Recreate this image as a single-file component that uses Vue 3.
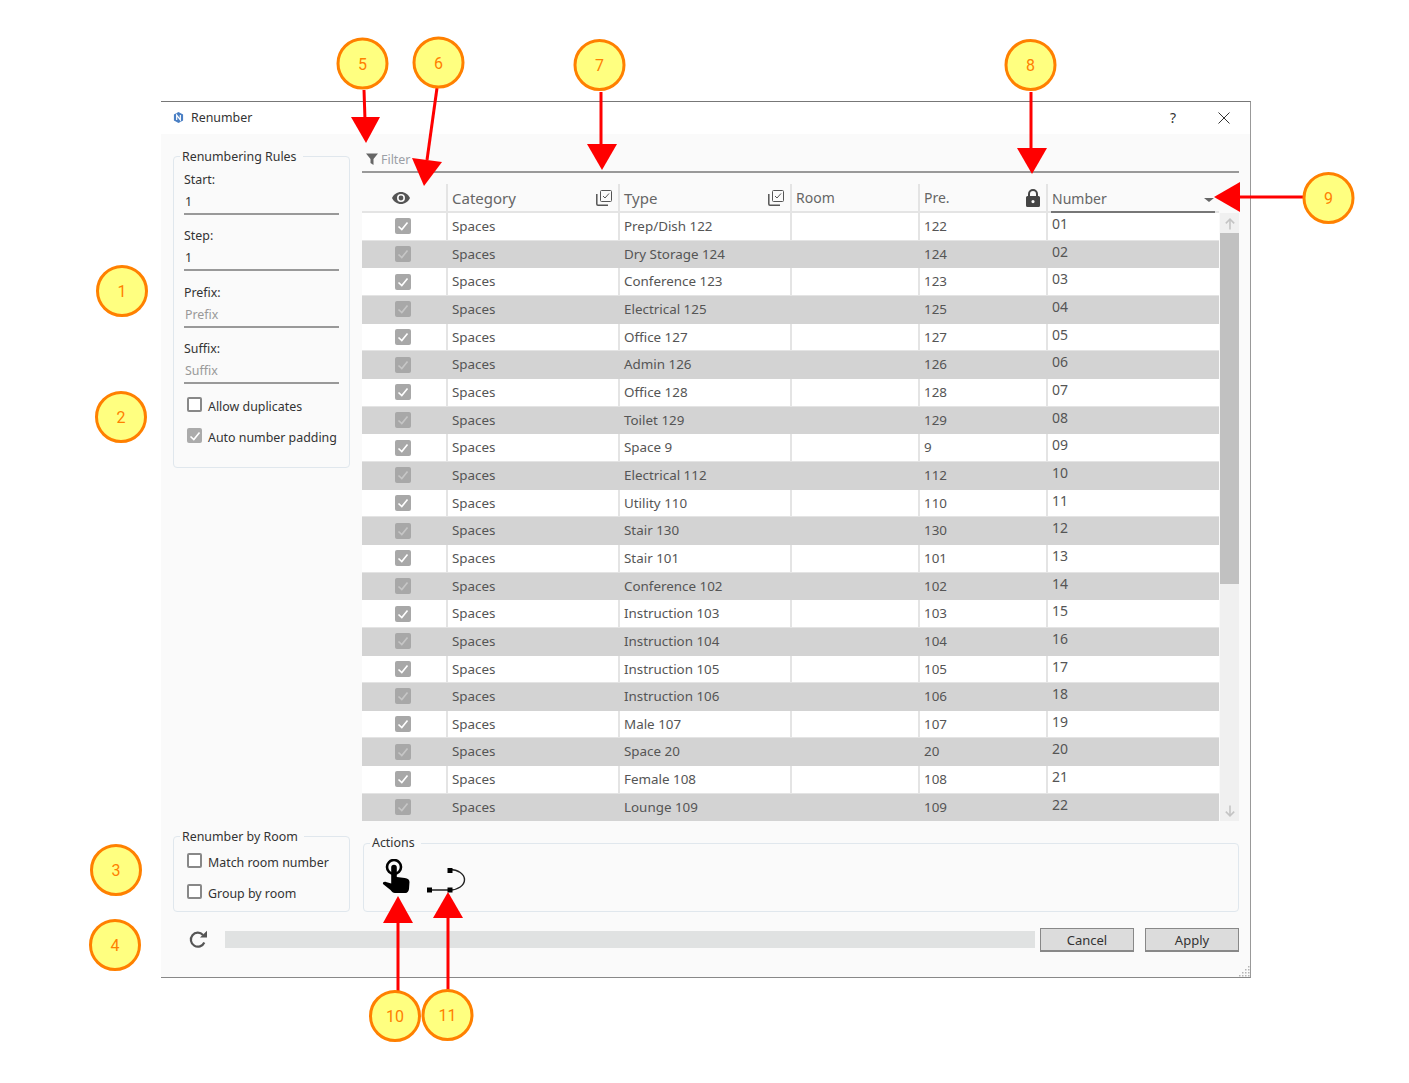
<template>
  <div class="page">
    <div class="window">
      <div class="titlebar">
        <svg class="app-icon" viewBox="0 0 12 12" width="11" height="11">
          <path d="M6 0 11 2.800V9.200L6 12 1 9.200V2.800Z" fill="#4a7fc4" />
          <path d="M4 8.600V3.400L8 8.600V3.400" fill="none" stroke="#fff" stroke-width="1.300" />
        </svg>
        <span class="title">Renumber</span>
        <span class="help">?</span>
        <svg class="close" viewBox="0 0 12 12" width="12" height="12">
          <path d="M.5.5 11.500 11.500M11.500.5.5 11.500" stroke="#333" stroke-width="1" fill="none" />
        </svg>
      </div>

      <div class="content">
        <!-- 左侧规则 -->
        <div class="left-col">
          <fieldset class="group rules">
            <legend>Renumbering Rules</legend>
            <div v-for="f in fields" :key="f.label" class="field">
              <label>{{ f.label }}:</label>
              <div class="value" :class="{ placeholder: f.placeholder }">{{ f.value }}</div>
            </div>
            <div class="check-line first">
              <span class="box"></span>
              <span>Allow duplicates</span>
            </div>
            <div class="check-line">
              <span class="box checked">
                <svg viewBox="0 0 16 16" width="16" height="16">
                  <path d="M3.500 8.500 6.800 11.500 12.500 4.500" fill="none" stroke="#fff" stroke-width="1.600" />
                </svg>
              </span>
              <span>Auto number padding</span>
            </div>
          </fieldset>
        </div>

        <!-- 表格 -->
        <div class="right-col">
          <div class="filter-bar">
            <svg viewBox="0 0 12 12" width="12" height="12">
              <path d="M0 .5H12L7.500 6V12L4.500 10V6Z" fill="#666" />
            </svg>
            <span>Filter</span>
          </div>

          <div class="table-head row-grid">
            <div class="th eye-cell">
              <svg viewBox="0 0 18 12" width="18" height="12">
                <path d="M9 0C5 0 1.700 2.500 0 6c1.700 3.500 5 6 9 6s7.300-2.500 9-6c-1.700-3.500-5-6-9-6Zm0 10a4 4 0 1 1 0-8 4 4 0 0 1 0 8Zm0-6.400a2.400 2.400 0 1 0 0 4.800 2.400 2.400 0 0 0 0-4.800Z" fill="#555" />
              </svg>
            </div>
            <div class="th">
              <span class="strong">Category</span>
              <svg class="stack" viewBox="0 0 16 16" width="16" height="16">
                <rect x="4.500" y=".5" width="11" height="11" rx="1" fill="none" stroke="#555" />
                <path d="M.8 4v10a1.200 1.200 0 0 0 1.200 1.200h10" fill="none" stroke="#555" stroke-width="1.500" />
                <path d="M7 6l2 2 4-4.500" fill="none" stroke="#555" />
              </svg>
            </div>
            <div class="th">
              <span class="strong">Type</span>
              <svg class="stack" viewBox="0 0 16 16" width="16" height="16">
                <rect x="4.500" y=".5" width="11" height="11" rx="1" fill="none" stroke="#555" />
                <path d="M.8 4v10a1.200 1.200 0 0 0 1.200 1.200h10" fill="none" stroke="#555" stroke-width="1.500" />
                <path d="M7 6l2 2 4-4.500" fill="none" stroke="#555" />
              </svg>
            </div>
            <div class="th"><span>Room</span></div>
            <div class="th">
              <span>Pre.</span>
              <svg class="lock" viewBox="0 0 14 18" width="14" height="18">
                <path d="M2 7V5a5 5 0 0 1 10 0v2h-2V5a3 3 0 0 0-6 0v2Z" fill="#444" />
                <path d="M1.500 7h11A1.500 1.500 0 0 1 14 8.500v8a1.500 1.500 0 0 1-1.500 1.500h-11A1.500 1.500 0 0 1 0 16.500v-8A1.500 1.500 0 0 1 1.500 7Zm5.500 4a1.600 1.600 0 1 0 0 3.200A1.600 1.600 0 0 0 7 11Z" fill="#444" fill-rule="evenodd" />
              </svg>
            </div>
            <div class="th number-head">
              <span>Number</span>
              <span class="sort"></span>
            </div>
          </div>

          <div class="table-body">
            <div class="rows">
              <div v-for="(r, i) in rows" :key="i" class="row row-grid" :class="{ alt: i % 2 === 1 }">
                <div class="td check-cell">
                  <span class="row-check">
                    <svg viewBox="0 0 16 16" width="16" height="16">
                      <path d="M3.500 8.500 6.800 11.500 12.500 4.500" fill="none" stroke-width="1.600" />
                    </svg>
                  </span>
                </div>
                <div class="td">Spaces</div>
                <div class="td">{{ r.type }}</div>
                <div class="td"></div>
                <div class="td">{{ r.pre }}</div>
                <div class="td num">{{ String(i + 1).padStart(2, '0') }}</div>
              </div>
            </div>
            <div class="scrollbar">
              <svg viewBox="0 0 10 10" width="12" height="12">
                <path d="M5 9.500V1M1.500 4.500 5 1l3.500 3.500" fill="none" stroke="#c4c4c4" stroke-width="1.300" />
              </svg>
              <div class="thumb"></div>
              <svg class="arrow-down" viewBox="0 0 10 10" width="12" height="12">
                <path d="M5 .5V9M1.500 5.500 5 9l3.500-3.500" fill="none" stroke="#c4c4c4" stroke-width="1.300" />
              </svg>
            </div>
          </div>
        </div>

        <fieldset class="group by-room">
          <legend>Renumber by Room</legend>
          <div class="check-line room-first">
            <span class="box"></span>
            <span>Match room number</span>
          </div>
          <div class="check-line">
            <span class="box"></span>
            <span>Group by room</span>
          </div>
        </fieldset>

        <fieldset class="group actions">
          <legend>Actions</legend>
          <div class="action-icons">
            <svg viewBox="0 0 30 38" width="30" height="38">
              <circle cx="12" cy="8" r="7" fill="none" stroke="#000" stroke-width="2.600" />
              <path d="M9.200 8.500a2.800 2.800 0 0 1 5.600 0v9.500l8 1c3 .5 4.700 1.500 4.700 4l-.5 7c-.3 2-1.500 4-3.500 4H13c-2 0-3-1-4.500-3L1 25c-.5-1.500 1-2.500 3-2l5.200 1.500Z" fill="#000" />
            </svg>
            <svg class="curve" viewBox="0 0 40 26" width="40" height="26">
              <path d="M3 22H23A14.500 10.250 0 0 0 23 1.500" fill="none" stroke="#222" stroke-width="1.400" />
              <rect x="0" y="19.500" width="5" height="5" fill="#000" />
              <rect x="20.500" y="19.500" width="5" height="5" fill="#000" />
              <rect x="20.500" y="0" width="5" height="5" fill="#000" />
            </svg>
          </div>
        </fieldset>
      </div>

      <div class="footer">
        <div class="refresh">
          <svg viewBox="0 0 20 20" width="20" height="20">
            <path d="M16.300 12.500A7 7 0 1 1 15 4.900" fill="none" stroke="#555" stroke-width="2.200" />
            <path d="M12 7.500H19V.8Z" fill="#555" />
          </svg>
        </div>
        <div class="progress"></div>
        <button class="btn cancel">Cancel</button>
        <button class="btn">Apply</button>
      </div>

      <svg class="grip" viewBox="0 0 12 12" width="12" height="12">
        <g fill="#b5b5b5">
          <rect x="10" y="1" width="1.500" height="1.500" />
          <rect x="7" y="4" width="1.500" height="1.500" />
          <rect x="10" y="4" width="1.500" height="1.500" />
          <rect x="4" y="7" width="1.500" height="1.500" />
          <rect x="7" y="7" width="1.500" height="1.500" />
          <rect x="10" y="7" width="1.500" height="1.500" />
          <rect x="1" y="10" width="1.500" height="1.500" />
          <rect x="4" y="10" width="1.500" height="1.500" />
          <rect x="7" y="10" width="1.500" height="1.500" />
          <rect x="10" y="10" width="1.500" height="1.500" />
        </g>
      </svg>
    </div>

    <!-- 标注 -->
    <svg class="notes" viewBox="0 0 1409 1083" width="1409" height="1083">
      <g stroke="#ff0000" stroke-width="3" fill="none">
        <path d="M364 90 365 120" />
        <path d="M437 88 427 160" />
        <path d="M601 92V146" />
        <path d="M1031 92V150" />
        <path d="M1238 197H1304" />
        <path d="M398 920V992" />
        <path d="M448 916V990" />
      </g>
      <g fill="#ff0000">
        <path d="M351 117H380L366 143Z" />
        <path d="M412 158 442 162 424 186Z" />
        <path d="M587 144H617L602 170Z" />
        <path d="M1017 148H1047L1032 174Z" />
        <path d="M1214 197 1240 182V212Z" />
        <path d="M398 896 383 923H413Z" />
        <path d="M448 892 433 918H463Z" />
      </g>
      <g v-for="n in notes" :key="n.t">
        <circle :cx="n.x" :cy="n.y" r="24.500" fill="#ffff80" stroke="#ff8000" stroke-width="3" />
        <text :x="n.x" :y="n.y + 6" text-anchor="middle" class="note-text">{{ n.t }}</text>
      </g>
    </svg>
  </div>
</template>

<script setup>
const fields = [
  { label: 'Start', value: '1' },
  { label: 'Step', value: '1' },
  { label: 'Prefix', value: 'Prefix', placeholder: true },
  { label: 'Suffix', value: 'Suffix', placeholder: true }
]

const rows = [
  { type: 'Prep/Dish 122', pre: '122' },
  { type: 'Dry Storage 124', pre: '124' },
  { type: 'Conference 123', pre: '123' },
  { type: 'Electrical 125', pre: '125' },
  { type: 'Office 127', pre: '127' },
  { type: 'Admin 126', pre: '126' },
  { type: 'Office 128', pre: '128' },
  { type: 'Toilet 129', pre: '129' },
  { type: 'Space 9', pre: '9' },
  { type: 'Electrical 112', pre: '112' },
  { type: 'Utility 110', pre: '110' },
  { type: 'Stair 130', pre: '130' },
  { type: 'Stair 101', pre: '101' },
  { type: 'Conference 102', pre: '102' },
  { type: 'Instruction 103', pre: '103' },
  { type: 'Instruction 104', pre: '104' },
  { type: 'Instruction 105', pre: '105' },
  { type: 'Instruction 106', pre: '106' },
  { type: 'Male 107', pre: '107' },
  { type: 'Space 20', pre: '20' },
  { type: 'Female 108', pre: '108' },
  { type: 'Lounge 109', pre: '109' }
]

const notes = [
  { t: '1', x: 122, y: 291 },
  { t: '2', x: 121, y: 417 },
  { t: '3', x: 116, y: 870 },
  { t: '4', x: 115, y: 945 },
  { t: '5', x: 362.5, y: 63.5 },
  { t: '6', x: 438.5, y: 62.5 },
  { t: '7', x: 599.5, y: 65 },
  { t: '8', x: 1030.5, y: 65 },
  { t: '9', x: 1328.5, y: 198 },
  { t: '10', x: 395, y: 1016 },
  { t: '11', x: 447.5, y: 1015 }
]
</script>

<style>
body {
  background: #fff;
}
</style>

<style scoped>
.page {
  position: relative;
  width: 1409px;
  height: 1083px;
  padding: 101px 0 0 161px;
  box-sizing: border-box;
  overflow: hidden;
  background: #fff;
  font-family: "Noto Sans", "Open Sans", sans-serif;
  font-size: 12.4px;
  color: #333;
}

.window {
  position: relative;
  width: 1090px;
  height: 877px;
  box-sizing: border-box;
  background: #fafafa;
  border-top: 1px solid #777;
  border-right: 1px solid #999;
  border-bottom: 1px solid #888;
}

.titlebar {
  height: 32px;
  display: flex;
  align-items: center;
  background: #fff;
  padding-left: 12px;
  padding-bottom: 1px;
  box-sizing: border-box;
}

.title {
  margin-left: 7px;
}

.help {
  margin-left: auto;
  font-size: 14px;
}

.close {
  margin: 0 20px 0 42px;
}

.content {
  display: grid;
  grid-template-columns: 177px 877px;
  column-gap: 12px;
  padding-left: 12px;
}

.left-col {
  padding-top: 12px;
}

.group {
  margin: 0;
  border: 1px solid #e0e7ed;
  border-radius: 4px;
  box-sizing: border-box;
  min-width: 0;
}

.group legend {
  padding: 0 6px 0 2px;
  margin-left: -4px;
  line-height: 18px;
}

.rules legend,
.by-room legend {
  padding-top: 2px;
}

.rules {
  width: 177px;
  height: 322px;
  padding: 4px 10px 0;
}

.field {
  height: 56.300px;
}

.field label {
  display: block;
  height: 22px;
  line-height: 20px;
}

.value {
  height: 21px;
  line-height: 19px;
  padding-left: 1px;
  border-bottom: 2px solid #999;
  box-sizing: content-box;
}

.value.placeholder {
  color: #999;
}

.check-line {
  display: flex;
  align-items: center;
  height: 31px;
  margin-left: 3px;
  gap: 6px;
  white-space: nowrap;
}

.check-line.first {
  margin-top: -4px;
}

.room-first {
  margin-top: 1px;
}

.box {
  width: 15px;
  height: 15px;
  box-sizing: border-box;
  border: 2px solid #888;
  border-radius: 2px;
  background: #fff;
  position: relative;
  top: -2px;
}

.box.checked {
  border: 0;
  background: #ababab;
}

.box.checked svg {
  display: block;
}

.filter-bar {
  height: 39px;
  box-sizing: border-box;
  border-bottom: 2px solid #999;
  display: flex;
  align-items: flex-end;
  padding: 0 0 3px 4px;
  gap: 3px;
  color: #9a9fa6;
}

.filter-bar svg {
  margin-bottom: 3px;
}

.row-grid {
  display: grid;
  grid-template-columns: 84px 172px 172px 128px 128px 173px;
}

.table-head {
  margin-top: 11px;
  width: 857px;
  height: 29px;
  border-bottom: 2px solid #e4e4e4;
  box-sizing: border-box;
  font-size: 14px;
  color: #666;
}

.th {
  display: flex;
  align-items: center;
  justify-content: space-between;
  padding: 0 6px 0 4px;
  border-left: 2px solid #e4e4e4;
}

.strong {
  font-size: 15px;
}

.eye-cell {
  border-left: 0;
  justify-content: center;
  padding: 0 6px 0 0;
}

.number-head {
  position: relative;
  padding-right: 5px;
  margin-bottom: -2px;
}

.number-head::after {
  content: "";
  position: absolute;
  left: 3px;
  right: 4px;
  bottom: 0;
  height: 2px;
  background: #777;
}

.sort {
  width: 0;
  height: 0;
  border-left: 5px solid transparent;
  border-right: 5px solid transparent;
  border-top: 4px solid #666;
  margin-top: 2px;
}

.table-body {
  display: flex;
  gap: 1px;
}

.rows {
  width: 857px;
}

.row {
  height: 27.670px;
  background: #fff;
  box-sizing: border-box;
  border-bottom: 1px solid #e4e4e4;
}

.row.alt {
  background: #d3d3d3;
  border-bottom-color: #d3d3d3;
}

.td {
  border-left: 2px solid #e4e4e4;
  padding-left: 4px;
  line-height: 26px;
  font-size: 13.400px;
  color: #555;
  white-space: nowrap;
}

.row.alt .td {
  border-left-color: #d3d3d3;
}

.check-cell {
  border-left: 0;
  display: flex;
  align-items: center;
  justify-content: center;
  padding: 0;
}

.num {
  line-height: 22px;
  font-size: 14px;
}

.row-check {
  width: 16px;
  height: 16px;
  border-radius: 2px;
  background: #a8a8a8;
  display: block;
  position: relative;
  left: -1px;
}

.row-check svg {
  display: block;
  stroke: #fff;
}

.alt .row-check svg {
  stroke: #c6c6c6;
}

.scrollbar {
  width: 19px;
  background: #f0f0f0;
  display: flex;
  flex-direction: column;
  align-items: center;
  padding-top: 5px;
  box-sizing: border-box;
}

.thumb {
  width: 100%;
  height: 351px;
  margin-top: 3px;
  background: #c1c1c1;
}

.arrow-down {
  margin-top: auto;
  margin-bottom: 4px;
}

.by-room {
  height: 86px;
  margin-top: 5px;
  padding: 0 10px;
}

.actions {
  height: 78px;
  margin-top: 13px;
  width: 876px;
  margin-left: 1px;
  padding: 0;
}

.actions legend {
  margin-left: 6px;
}

.action-icons {
  display: flex;
  align-items: flex-start;
  gap: 15px;
  padding-left: 18px;
  margin-top: 7px;
  height: 20px;
}

.curve {
  margin-top: 9px;
}

.footer {
  display: flex;
  align-items: center;
  height: 24px;
  margin-top: 16px;
  padding-left: 12px;
  width: 1078px;
  box-sizing: border-box;
}

.refresh {
  width: 52px;
  padding-left: 15px;
  box-sizing: border-box;
  display: flex;
}

.progress {
  flex: 1;
  height: 17px;
  margin-top: -2px;
  background: #e0e2e2;
}

.btn {
  width: 94px;
  height: 24px;
  margin-left: 11px;
  padding: 0;
  background: #dcdcdc;
  border: 1px solid #888;
  border-bottom-width: 2px;
  font: inherit;
  font-size: 13px;
  color: #333;
}

.btn.cancel {
  margin-left: 5px;
}

.grip {
  position: absolute;
  right: 0;
  bottom: 0;
}

.notes {
  position: absolute;
  left: 0;
  top: 0;
  pointer-events: none;
}

.note-text {
  font-family: Roboto, sans-serif;
  font-size: 16px;
  fill: #ff8000;
}
</style>
